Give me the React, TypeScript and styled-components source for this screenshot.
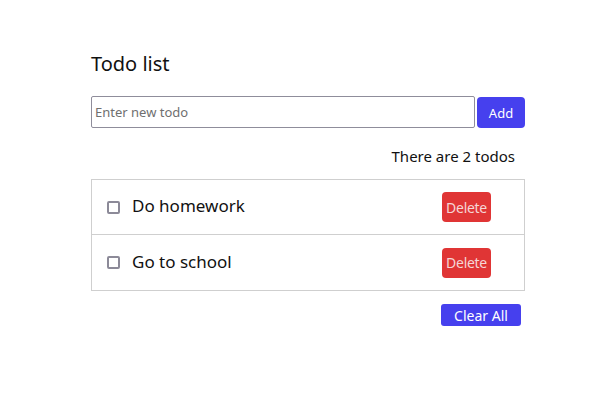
import React, { useState } from "react";
import styled, { createGlobalStyle } from "styled-components";

const Global = createGlobalStyle`
  html, body { margin: 0; padding: 0; background: #fff; }
  body { font-family: "Noto Sans", "Open Sans", sans-serif; color: #111; }
`;

const Page = styled.div`
  width: 616px;
  height: 410px;
  padding: 50px 0 0 91px;
  box-sizing: border-box;
`;

const Wrap = styled.div`
  width: 434px;
  display: flex;
  flex-direction: column;
`;

const Title = styled.h1`
  margin: 0;
  font-size: 20px;
  font-weight: 400;
  line-height: 28px;
  color: #111;
`;

const Form = styled.div`
  display: flex;
  gap: 2px;
  margin-top: 18px;
  align-items: stretch;
`;

const Input = styled.input`
  flex: 1;
  height: 32px;
  box-sizing: border-box;
  border: 1px solid #8f8d9b;
  border-radius: 2px;
  padding: 0 3px;
  font-family: "Noto Sans", sans-serif;
  font-size: 13px;
  color: #333;
  outline: none;
  &::placeholder { color: #6f6f6f; }
`;

const Btn = styled.button<{ $bg: string; $fg?: string }>`
  border: none;
  background: ${(p) => p.$bg};
  color: ${(p) => p.$fg || "#fff"};
  font-family: "Noto Sans", sans-serif;
  cursor: pointer;
  padding: 0;
`;

const AddBtn = styled(Btn)`
  width: 48px;
  height: 31px;
  margin-top: 1px;
  border-radius: 4px;
  font-size: 13px;
`;

const Count = styled.div`
  align-self: flex-end;
  margin: 18px 10px 0 0;
  font-size: 15px;
  line-height: 20px;
`;

const List = styled.ul`
  list-style: none;
  margin: 13px 0 0;
  padding: 0;
  border: 1px solid #cfcfcf;
`;

const Row = styled.li`
  display: flex;
  align-items: center;
  height: 54px;
  padding: 0 0 0 15px;
  & + & { border-top: 1px solid #cfcfcf; height: 55px; }
`;

const Check = styled.span`
  width: 13px;
  height: 13px;
  box-sizing: border-box;
  border: 2px solid #8c8a98;
  border-radius: 2px;
`;

const Label = styled.span`
  margin-left: 12px;
  font-size: 17px;
  flex: 1;
  line-height: 24px;
  margin-bottom: 2px;
`;

const DelBtn = styled(Btn)`
  width: 49px;
  height: 30px;
  border-radius: 4px;
  font-size: 14px;
  margin-right: 33px;
  letter-spacing: -0.3px;
`;

const Footer = styled.div`
  display: flex;
  justify-content: flex-end;
  padding-right: 4px;
  margin-top: 13px;
`;

const ClearBtn = styled(Btn)`
  width: 80px;
  height: 22px;
  border-radius: 3px;
  font-size: 14px;
`;

export default function App() {
  const [todos] = useState(["Do homework", "Go to school"]);
  return (
    <Page>
      <Global />
      <Wrap>
        <Title>Todo list</Title>
        <Form>
          <Input placeholder="Enter new todo" />
          <AddBtn $bg="#4640ee">Add</AddBtn>
        </Form>
        <Count>There are {todos.length} todos</Count>
        <List>
          {todos.map((t) => (
            <Row key={t}>
              <Check />
              <Label>{t}</Label>
              <DelBtn $bg="#e03535" $fg="#f5d5d5">Delete</DelBtn>
            </Row>
          ))}
        </List>
        <Footer>
          <ClearBtn $bg="#4640ee">Clear All</ClearBtn>
        </Footer>
      </Wrap>
    </Page>
  );
}
